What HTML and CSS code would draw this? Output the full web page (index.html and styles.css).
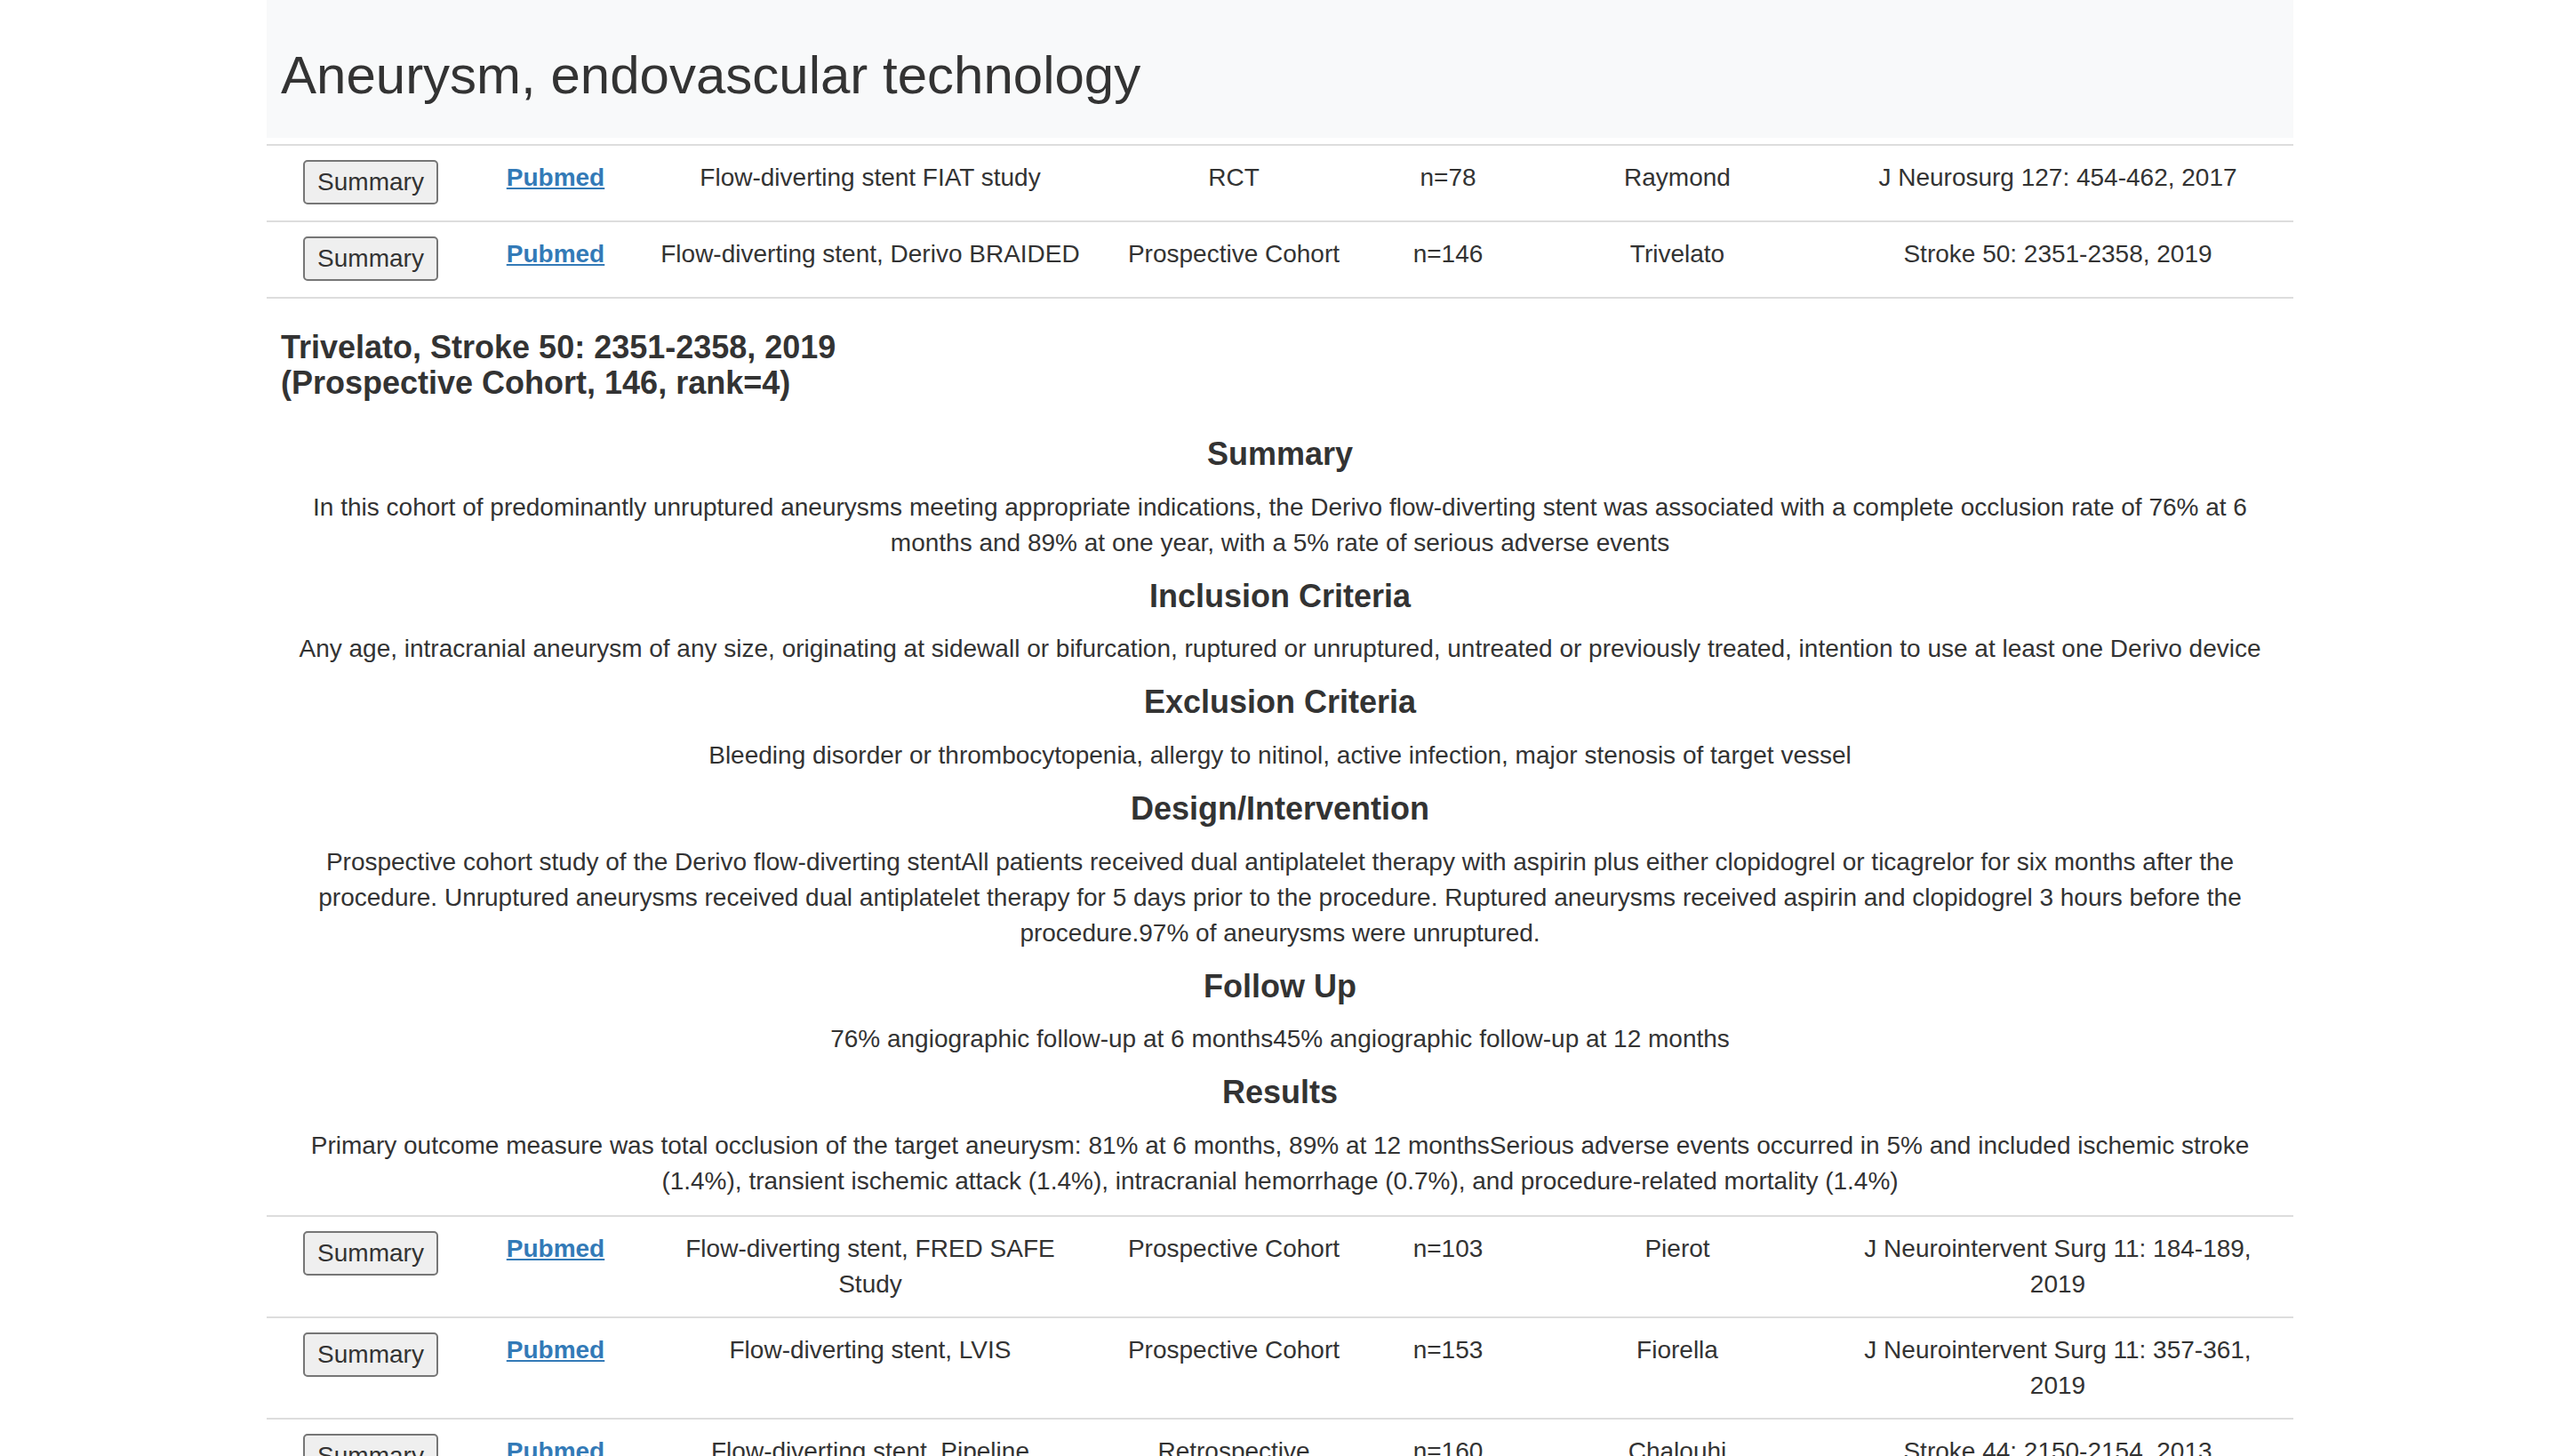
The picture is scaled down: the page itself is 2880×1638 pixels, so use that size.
FILE: index.html
```html
<!DOCTYPE html>
<html lang="en">
<head>
<meta charset="utf-8">
<title>Aneurysm, endovascular technology</title>
<link rel="stylesheet" href="styles.css">
</head>
<body>
<div class="container">
  <div class="jumbotron">
    <h1 class="page-title">Aneurysm, endovascular technology</h1>
  </div>
  <table class="studies">
    <colgroup>
      <col class="col-btn">
      <col class="col-link">
      <col class="col-title">
      <col class="col-design">
      <col class="col-n">
      <col class="col-author">
      <col class="col-journal">
    </colgroup>
    <tbody>
      <tr>
        <td><button class="summary-btn" type="button">Summary</button></td>
        <td><a class="pubmed" href="#">Pubmed</a></td>
        <td>Flow-diverting stent FIAT study</td>
        <td>RCT</td>
        <td>n=78</td>
        <td>Raymond</td>
        <td>J Neurosurg 127: 454-462, 2017</td>
      </tr>
      <tr>
        <td><button class="summary-btn" type="button">Summary</button></td>
        <td><a class="pubmed" href="#">Pubmed</a></td>
        <td>Flow-diverting stent, Derivo BRAIDED</td>
        <td>Prospective Cohort</td>
        <td>n=146</td>
        <td>Trivelato</td>
        <td>Stroke 50: 2351-2358, 2019</td>
      </tr>
      <tr class="detail-row">
        <td colspan="7" class="detail">
          <h4 class="study-ref">Trivelato, Stroke 50: 2351-2358, 2019<br>(Prospective Cohort, 146, rank=4)</h4>
          <h4 class="section-title">Summary</h4>
          <p class="section-text">In this cohort of predominantly unruptured aneurysms meeting appropriate indications, the Derivo flow-diverting stent was associated with a complete occlusion rate of 76% at 6 months and 89% at one year, with a 5% rate of serious adverse events</p>
          <h4 class="section-title">Inclusion Criteria</h4>
          <p class="section-text">Any age, intracranial aneurysm of any size, originating at sidewall or bifurcation, ruptured or unruptured, untreated or previously treated, intention to use at least one Derivo device</p>
          <h4 class="section-title">Exclusion Criteria</h4>
          <p class="section-text">Bleeding disorder or thrombocytopenia, allergy to nitinol, active infection, major stenosis of target vessel</p>
          <h4 class="section-title">Design/Intervention</h4>
          <p class="section-text">Prospective cohort study of the Derivo flow-diverting stentAll patients received dual antiplatelet therapy with aspirin plus either clopidogrel or ticagrelor for six months after the procedure. Unruptured aneurysms received dual antiplatelet therapy for 5 days prior to the procedure. Ruptured aneurysms received aspirin and clopidogrel 3 hours before the procedure.97% of aneurysms were unruptured.</p>
          <h4 class="section-title">Follow Up</h4>
          <p class="section-text">76% angiographic follow-up at 6 months45% angiographic follow-up at 12 months</p>
          <h4 class="section-title">Results</h4>
          <p class="section-text">Primary outcome measure was total occlusion of the target aneurysm: 81% at 6 months, 89% at 12 monthsSerious adverse events occurred in 5% and included ischemic stroke (1.4%), transient ischemic attack (1.4%), intracranial hemorrhage (0.7%), and procedure-related mortality (1.4%)</p>
        </td>
      </tr>
      <tr>
        <td><button class="summary-btn" type="button">Summary</button></td>
        <td><a class="pubmed" href="#">Pubmed</a></td>
        <td>Flow-diverting stent, FRED SAFE Study</td>
        <td>Prospective Cohort</td>
        <td>n=103</td>
        <td>Pierot</td>
        <td>J Neurointervent Surg 11: 184-189, 2019</td>
      </tr>
      <tr>
        <td><button class="summary-btn" type="button">Summary</button></td>
        <td><a class="pubmed" href="#">Pubmed</a></td>
        <td>Flow-diverting stent, LVIS</td>
        <td>Prospective Cohort</td>
        <td>n=153</td>
        <td>Fiorella</td>
        <td>J Neurointervent Surg 11: 357-361, 2019</td>
      </tr>
      <tr>
        <td><button class="summary-btn" type="button">Summary</button></td>
        <td><a class="pubmed" href="#">Pubmed</a></td>
        <td>Flow-diverting stent, Pipeline Embolization Device</td>
        <td>Retrospective Cohort</td>
        <td>n=160</td>
        <td>Chalouhi</td>
        <td>Stroke 44: 2150-2154, 2013</td>
      </tr>
    </tbody>
  </table>
</div>
</body>
</html>
```
FILE: styles.css
```css
html, body {
  margin: 0;
  padding: 0;
  background: #ffffff;
}

body {
  font-family: "Liberation Sans", Arial, Helvetica, sans-serif;
  font-size: 28px;
  line-height: 40px;
  color: #333333;
}

.container {
  width: 2280px;
  margin: 0 auto;
}

.jumbotron {
  background: #f8f9fa;
  padding: 52px 16px 37px;
}

.page-title {
  margin: 0;
  font-size: 60px;
  line-height: 66px;
  font-weight: 400;
  color: #333333;
}

.studies {
  width: 100%;
  table-layout: fixed;
  border-collapse: separate;
  border-spacing: 0;
  margin-top: 7px;
}

.col-btn { width: 234px; }
.col-link { width: 182px; }
.col-title { width: 526px; }
.col-design { width: 292px; }
.col-n { width: 190px; }
.col-author { width: 326px; }
.col-journal { width: 530px; }

.studies td {
  padding: 16px;
  border-top: 2px solid #dddddd;
  vertical-align: top;
  text-align: center;
}

.summary-btn {
  font: inherit;
  color: #333333;
  background: #efefef;
  border: 2px solid #767676;
  border-radius: 5px;
  padding: 3px 14px;
  margin: 0 0 2px;
  vertical-align: top;
}

.pubmed {
  color: #337ab7;
  font-weight: 700;
  text-decoration: underline;
}

.studies td.detail {
  text-align: left;
  padding: 35px 16px 0;
}

.study-ref {
  margin: 0 0 39px;
  font-size: 36px;
  line-height: 1.1;
  font-weight: 700;
}

.section-title {
  margin: 18px 0;
  padding-top: 2px;
  font-size: 36px;
  line-height: 1.1;
  font-weight: 700;
  text-align: center;
}

.section-text {
  margin: 0 0 18px;
  padding-top: 2px;
  text-align: center;
}
```
